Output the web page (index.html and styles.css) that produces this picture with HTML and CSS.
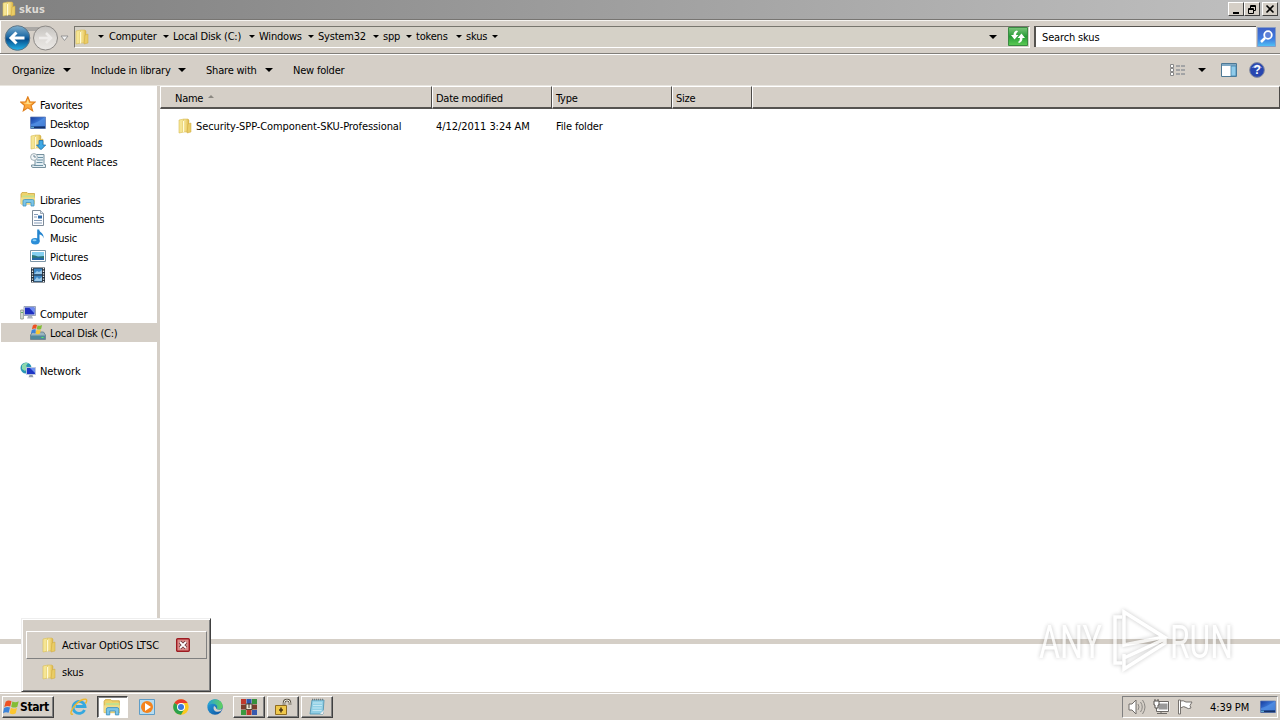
FILE: index.html
```html
<!DOCTYPE html>
<html lang="en">
<head>
    <meta charset="UTF-8">
    <meta name="viewport" content="width=device-width, initial-scale=1.0">
    <title>skus</title>
    <link rel="stylesheet" href="styles.css">
</head>
<body>
    <!-- Shared icons -->
    <svg class="defs" width="0" height="0">
        <defs>
            <linearGradient id="gold"><stop offset="0" stop-color="#f9edaa"/><stop offset=".6" stop-color="#edd272"/><stop offset="1" stop-color="#d9b245"/></linearGradient>
            <linearGradient id="blue" x2="1" y2="1"><stop offset="0" stop-color="#163a9c"/><stop offset=".5" stop-color="#3b78d8"/><stop offset="1" stop-color="#1c4fae"/></linearGradient>
            <linearGradient id="back" x2="0" y2="1"><stop offset="0" stop-color="#7fb0cf"/><stop offset=".45" stop-color="#1f6aa5"/><stop offset=".55" stop-color="#064d8c"/><stop offset="1" stop-color="#26b4ea"/></linearGradient>
            <linearGradient id="fwd" x2="0" y2="1"><stop offset="0" stop-color="#c4c2bf"/><stop offset=".5" stop-color="#dddad6"/><stop offset="1" stop-color="#ebe9e6"/></linearGradient>
            <linearGradient id="find" x2="0" y2="1"><stop offset="0" stop-color="#3e5fc4"/><stop offset=".6" stop-color="#3e7be0"/><stop offset="1" stop-color="#52c3f5"/></linearGradient>
            <linearGradient id="go" x2="0" y2="1"><stop offset="0" stop-color="#7dc57c"/><stop offset=".5" stop-color="#259c36"/><stop offset="1" stop-color="#5dcc55"/></linearGradient>
            <linearGradient id="edge" x2="1" y2="1"><stop offset="0" stop-color="#2ba7e0"/><stop offset="1" stop-color="#0c4f9e"/></linearGradient>
            <linearGradient id="edgeTop"><stop offset="0" stop-color="#249fdc"/><stop offset="1" stop-color="#62d35a"/></linearGradient>
        </defs>
        <symbol id="folder" viewBox="0 0 16 16">
            <path d="M2 2l5-1v13l-5 1z" fill="#f5e594" stroke="#d8bd55" stroke-width=".6"/>
            <path d="M7 1h4l1 1v12H6V3z" fill="url(#gold)" stroke="#d3b34c" stroke-width=".5"/>
            <path d="M11 6l3-1v9l-4 1z" fill="#e9cc66" stroke="#cfa83e" stroke-width=".5"/>
            <path d="M6.500 3v11.500" stroke="#fffbd8"/>
        </symbol>
        <symbol id="star" viewBox="0 0 16 16"><path d="M7.800.8l2.100 5 5.300.2-4.100 3.500 1.500 5.300-4.800-3-4.500 3 1.300-5.300L.6 6l5.100-.2z" fill="#fda83c" stroke="#e0801e" stroke-width="1.100"/><path d="M7.800 3l1.200 4 3.500.2-3.300 1-5.700-1 3-.4z" fill="#ffe08a"/></symbol>
        <symbol id="desktop" viewBox="0 0 16 16"><path d="M.5 2h15v11.500H.5z" fill="url(#blue)" stroke="#5b76b0" stroke-width=".7"/><path d="M1 9q6-1 14-7v9H1z" fill="#5b97e8" opacity=".6"/><path d="M1 11.500h14v1.800H1z" fill="#173266"/><path d="M1 11.800h3v1H1z" fill="#73c5e8"/></symbol>
        <symbol id="down" viewBox="0 0 16 16"><use href="#folder" x="-1"/><path d="M9 6.500h4V11h2.700L11 15.700 6.500 11H9z" fill="#3ea8e5" stroke="#1c6fae" stroke-width=".8"/></symbol>
        <symbol id="recent" viewBox="0 0 16 16"><path d="M5 1.500h9v10h1.500v3H3q-2 0-1.500-2.500H5z" fill="#e3eef3" stroke="#76909d"/><path d="M8 4.500h5M7 7h6M6.500 9.500h6M4 12.500h9" stroke="#6f93a6"/><circle cx="4" cy="4" r="3.400" fill="#f4f7f8" stroke="#8b9da6" stroke-width=".8"/><path d="M4 2v2h2" fill="none" stroke="#506f80" stroke-width=".8"/></symbol>
        <symbol id="library" viewBox="0 0 16 16"><path d="M1 3l1-1.500h5l1 1h6.500V13H1z" fill="#efd36c" stroke="#cba740" stroke-width=".8"/><path d="M2.500 4.500h12v2h-12z" fill="#c3e08e"/><path d="M1 6.500h14V13H1z" fill="#f2dd89"/><path d="M3 15V10q0-1.500 1.500-1.500h8Q14 8.500 14 10v5h-3v-3.500H6V15z" fill="#7cc5e8" stroke="#4294c2" stroke-width=".8"/></symbol>
        <symbol id="document" viewBox="0 0 16 16"><path d="M2.500.5h8l3 3v12h-11z" fill="#fcfdff" stroke="#7e8b99"/><path d="M10.500.5v3h3" fill="#dbe4ed" stroke="#7e8b99" stroke-width=".7"/><path d="M4 4.500h4M4 7h3M4 10.500h8M4 13h8" stroke="#7890ae" stroke-width=".9"/><path d="M8 5.500h4v3H8z" fill="#2f6cab"/></symbol>
        <symbol id="music" viewBox="0 0 16 16"><ellipse cx="5.300" cy="12.200" rx="4.300" ry="3.200" fill="#2b8ed8"/><path d="M7.200 12V.5h2c0 3 5.300 3.500 4.300 9-.5-3-2.500-4-4-4v7z" fill="#2585cf"/><ellipse cx="4.500" cy="11.200" rx="2" ry="1" fill="#8bd0f6"/></symbol>
        <symbol id="picture" viewBox="0 0 16 16"><path d="M.5 2.500h15v11H.5z" fill="#fff" stroke="#7d96a7"/><path d="M2 4h12v8H2z" fill="#84cff0"/><path d="M2 7q3 0 6 1.500l6-.5v4H2z" fill="#2c7776"/><path d="M2 10.500q6-2 12 0V12H2z" fill="#2467a8"/></symbol>
        <symbol id="video" viewBox="0 0 16 16"><path d="M1 .5h14v15H1z" fill="#26303b"/><path d="M4 1.500h8v6H4zM4 8.500h8v6H4z" fill="#3e87c5"/><path d="M4 7l3-3 2 1 3-2v4zM4 14l3-4 2 2 3-2v4z" fill="#9ac8e8"/><path d="M2.500 1v14M13.500 1v14" stroke="#e8edf0" stroke-width="1.300" stroke-dasharray="1.300 1.300"/></symbol>
        <symbol id="computer" viewBox="0 0 16 16"><path d="M.7 5h2.600v9H.7z" fill="#dde5dc" stroke="#7e8b7d" stroke-width=".8"/><path d="M1.300 7h1.500v1H1.300z" fill="#3b9f43"/><path d="M4 1.500h11.500v9H4z" fill="#e1e6ef" stroke="#8490a9" stroke-width=".8"/><path d="M5 2.500h9.500v7H5z" fill="#1c2ec0"/><path d="M9 2.500h5.500v6z" fill="#6d8bf0"/><path d="M8 11h4l1 2.500H7z" fill="#a9b1bd"/></symbol>
        <symbol id="winflag" viewBox="0 0 16 16"><path d="M2.500 2.500Q5 .5 8 2L6.800 7Q4 6 1.200 7.500z" fill="#ee5122"/><path d="M8.800 2.300q3 1.500 6-.3l-1.300 5.200q-3 1.800-5.800 0z" fill="#83bd36"/><path d="M1 8.500q3-1.700 5.600-.4L5.300 13q-2.700-1.200-5.300.4z" fill="#3b83d9"/><path d="M7.500 8.300q3 1.600 5.700 0L12 13.400q-3 1.800-5.800-.1z" fill="#fcc630"/></symbol>
        <symbol id="disk" viewBox="0 0 16 16"><path d="M2.500 8h11l2 3v4.500H.5V11z" fill="#9ab4bf" stroke="#607a86" stroke-width=".8"/><path d="M1 11.500h14V15H1z" fill="#51899b"/><path d="M11.500 13h2v1h-2z" fill="#5aef65"/><use href="#winflag" x="1" y="-.5" width="12" height="12"/></symbol>
        <symbol id="network" viewBox="0 0 16 16"><circle cx="6" cy="6" r="5.500" fill="#2995b4"/><path d="M2 3q3-3 6-2L6 4l2 2-3 3-3-2z" fill="#8ed9ad"/><path d="M6.500 5.500h9v7h-9z" fill="#1e36c5" stroke="#c3ccdf" stroke-width=".9"/><path d="M10 6h5v5z" fill="#6c90ee"/><path d="M9.500 13h3l1 2.300H8.500z" fill="#929dad"/></symbol>
    </svg>

    <div class="screen">
        <!-- Title bar -->
        <div class="titlebar">
            <svg class="icon"><use href="#folder"/></svg>
            <span class="title">skus</span>
            <div class="controls">
                <div class="control"><svg width="13" height="11"><path d="M3 8h6v2H3z"/></svg></div>
                <div class="control"><svg width="13" height="11"><path d="M4.500 4V1.500h5v5H8M4.500 2.500h5M2.500 4.500h5v5h-5zM2.500 5.500h5" fill="none" stroke="#000"/></svg></div>
                <div class="control close"><svg width="13" height="11"><path d="M2.500 1.500l7 7M9.500 1.500l-7 7" stroke="#000" stroke-width="1.600"/></svg></div>
            </div>
        </div>

        <!-- Address bar -->
        <div class="navbar">
            <svg class="history" width="70" height="28" viewBox="0 0 70 28">
                <path d="M17 3h29v4H17z" fill="#aaa8a5"/>
                <circle cx="17.500" cy="14" r="12.300" fill="url(#back)" stroke="#5d7485"/>
                <path d="M10.500 14h14M16.500 8.500L11 14l5.500 5.500" fill="none" stroke="#fff" stroke-width="3"/>
                <circle cx="45.500" cy="14" r="12" fill="url(#fwd)" stroke="#8c8986"/>
                <path d="M39 14h12M46 9l5 5-5 5" fill="none" stroke="#eeecea" stroke-width="2.500"/>
                <path d="M61 12h7l-3.500 4.500z" fill="#f2f2f2" stroke="#8d8d8d" stroke-width=".9"/>
            </svg>
            <div class="address">
                <svg class="icon"><use href="#folder"/></svg>
                <i class="arrow"></i>
                <div class="crumbs">
                    <span>Computer<i class="arrow"></i></span>
                    <span>Local Disk (C:)<i class="arrow"></i></span>
                    <span>Windows<i class="arrow"></i></span>
                    <span>System32<i class="arrow"></i></span>
                    <span>spp<i class="arrow"></i></span>
                    <span>tokens<i class="arrow"></i></span>
                    <span>skus<i class="arrow"></i></span>
                </div>
                <i class="arrow big"></i>
                <svg class="refresh" width="20" height="19" viewBox="0 0 20 19"><path d="M.5.5h19v18H.5z" fill="url(#go)" stroke="#3a8a42"/><path d="M9 3.500Q5.500 4 5.500 8H3l3.500 4.500L10.500 8H8q0-2.500 2-3.500zM11 16q3.500-1 3.500-5H17l-3.500-4.500L9.500 11H12q0 3-2 4z" fill="#fff"/></svg>
            </div>
            <div class="search">Search skus</div>
            <svg class="find" width="19" height="20" viewBox="0 0 19 20"><path d="M.5.5h18v19H.5z" fill="url(#find)" stroke="#879cc5"/><circle cx="11" cy="8" r="3.800" fill="#5d80d8" stroke="#fff" stroke-width="1.800"/><path d="M8 11l-4 4" stroke="#fff" stroke-width="2.500"/></svg>
        </div>

        <!-- Toolbar -->
        <div class="toolbar">
            <span class="organize">Organize<i class="arrow big"></i></span>
            <span class="include">Include in library<i class="arrow big"></i></span>
            <span class="share">Share with<i class="arrow big"></i></span>
            <span>New folder</span>
            <div class="tools">
                <svg width="16" height="14" viewBox="0 0 16 14"><path d="M.5 1.500h3v3h-3zM.5 5.500h3v3h-3zM.5 9.500h3v3h-3z" fill="#fff" stroke="#888"/><path d="M6 3h9M6 7h9M6 11h9" stroke="#707983" stroke-dasharray="4 1"/></svg>
                <i class="arrow big"></i>
                <svg class="preview" width="16" height="14" viewBox="0 0 16 14"><path d="M.5.5h15v13H.5z" fill="#fff" stroke="#4d7894"/><path d="M1 1h14v2H1z" fill="#7fa9c5"/><path d="M10 3h5v10h-5z" fill="#8fcbea" stroke="#4282a8" stroke-width=".8"/></svg>
                <svg class="help" width="16" height="16" viewBox="0 0 16 16"><circle cx="8" cy="8" r="7.400" fill="#2746b0" stroke="#868da1"/><path d="M2.500 6Q8-1 13.500 6 8 5 2.500 6z" fill="#7c94dc"/><text x="8" y="12.300" text-anchor="middle" class="question">?</text></svg>
            </div>
        </div>

        <div class="main">
            <!-- Navigation pane -->
            <div class="sidebar">
                <div class="group">
                    <div class="item head"><svg class="icon"><use href="#star"/></svg>Favorites</div>
                    <div class="item"><svg class="icon"><use href="#desktop"/></svg>Desktop</div>
                    <div class="item"><svg class="icon"><use href="#down"/></svg>Downloads</div>
                    <div class="item wide"><svg class="icon"><use href="#recent"/></svg>Recent Places</div>
                </div>
                <div class="group">
                    <div class="item head"><svg class="icon"><use href="#library"/></svg>Libraries</div>
                    <div class="item"><svg class="icon"><use href="#document"/></svg>Documents</div>
                    <div class="item"><svg class="icon"><use href="#music"/></svg>Music</div>
                    <div class="item wide"><svg class="icon"><use href="#picture"/></svg>Pictures</div>
                    <div class="item"><svg class="icon"><use href="#video"/></svg>Videos</div>
                </div>
                <div class="group">
                    <div class="item head"><svg class="icon"><use href="#computer"/></svg>Computer</div>
                    <div class="item selected"><svg class="icon"><use href="#disk"/></svg>Local Disk (C:)</div>
                </div>
                <div class="group">
                    <div class="item head wide"><svg class="icon"><use href="#network"/></svg>Network</div>
                </div>
            </div>

            <!-- File list -->
            <div class="files">
                <div class="columns">
                    <div class="col name">Name<i class="sort"></i></div>
                    <div class="col">Date modified</div>
                    <div class="col">Type</div>
                    <div class="col">Size</div>
                    <div class="col"></div>
                </div>
                <div class="row">
                    <div class="file"><svg class="icon"><use href="#folder"/></svg><span>Security-SPP-Component-SKU-Professional</span></div>
                    <div class="date">4/12/2011 3:24 AM</div>
                    <div class="type">File folder</div>
                </div>
            </div>
        </div>
        <div class="details"></div>

        <!-- Taskbar -->
        <div class="taskbar">
            <div class="start"><svg width="17" height="17"><use href="#winflag"/></svg>Start</div>
            <div class="task"><svg width="18" height="18" viewBox="0 0 18 18"><path d="M14.500 12A6 6 0 1 1 15 8.500H5.500" fill="none" stroke="#35a8df" stroke-width="2.800"/><path d="M3 16C-3 18 5 4 13 1.500c5-1.500 4 2 2.500 4" fill="none" stroke="#edb82e" stroke-width="1.400"/></svg></div>
            <div class="task pressed"><svg width="18" height="18"><use href="#library"/></svg></div>
            <div class="task"><svg width="16" height="16" viewBox="0 0 16 16"><path d="M.5.5h15v15H.5z" fill="#b7dcf0" stroke="#5e9dc7"/><circle cx="8" cy="8" r="6" fill="#f4831c"/><path d="M6 4l6 4-6 4z" fill="#fff"/></svg></div>
            <div class="task"><svg width="16" height="16" viewBox="0 0 16 16"><circle cx="8" cy="8" r="7.700" fill="#fbc91e"/><path d="M8 8L1.300 4.100A7.700 7.700 0 0 1 14.700 4.100H8z" fill="#e83b2e"/><path d="M8 8L1.300 4.100A7.700 7.700 0 0 0 8 15.700L11.400 10z" fill="#2ca24c"/><circle cx="8" cy="8" r="4" fill="#fff"/><circle cx="8" cy="8" r="3" fill="#3978de"/></svg></div>
            <div class="task"><svg width="16" height="16" viewBox="0 0 16 16"><circle cx="8" cy="8" r="7.700" fill="url(#edge)"/><path d="M.5 7C2-2 15-1 15.700 7c.3 4-5 4.500-6 2.500C12 6 6 2 .5 7z" fill="url(#edgeTop)"/><path d="M7 7c-2 5 3 7 7 5l1-2q-3 1.500-5.500 0C9 9 9 8 7 7z" fill="#d6d0c9"/></svg></div>
            <div class="task raised"><svg width="18" height="18" viewBox="0 0 18 18"><path d="M1 1h5v5H1zM1 12h5v5H1z" fill="#c0392c"/><path d="M6.500 1h5v5h-5z" fill="#3156ad"/><path d="M12 1h5v5h-5z" fill="#35913c"/><path d="M1 6.500h16v5H1z" fill="#7c3d2c"/><path d="M1 12h5v5H1z" fill="#3a9a40"/><path d="M6.500 12h5v5h-5z" fill="#b8392c"/><path d="M12 12h5v5h-5z" fill="#3659ae"/><path d="M6 6h6v5.500H6z" fill="#ece5d4" stroke="#554a3a"/><path d="M9 5v5" stroke="#3b332a"/></svg></div>
            <div class="task raised"><svg width="18" height="18" viewBox="0 0 18 18"><path d="M10 8V5q0-3 3-3t3 3v2" fill="none" stroke="#554f43" stroke-width="2.500"/><path d="M10 8V5q0-3 3-3t3 3v2" fill="none" stroke="#efebdf"/><path d="M1.500 7.500h11v9h-11z" fill="#efc84b" stroke="#8f6b20"/><path d="M7 9.500v5M5 12h4" stroke="#473314" stroke-width="1.500"/></svg></div>
            <div class="task raised"><svg width="18" height="18" viewBox="0 0 18 18"><path d="M4 2h12l-1 14H2z" fill="#91cfe5" stroke="#4a91ad" stroke-width=".8"/><path d="M5 5h9M5 7.500h9M4.500 10h9M4.500 12.500h9" stroke="#c4e8f3"/><path d="M4 1.500h12" stroke="#777" stroke-width="1.500" stroke-dasharray="1 1"/><path d="M12 16l4-4-1 4z" fill="#eee"/></svg></div>
            <div class="tray">
                <svg width="18" height="16" viewBox="0 0 18 16"><path d="M1 5h3l4-4v14l-4-4H1z" fill="#fff" stroke="#706d69"/><path d="M10 5q2 3 0 6M12.500 3q3.500 5 0 10M14.500 1q5 7 0 14" fill="none" stroke="#8a8783"/></svg>
                <svg class="lan" width="17" height="16" viewBox="0 0 17 16"><path d="M4.500 3.500h11v8h-11z" fill="#999" stroke="#fff" stroke-width="2"/><path d="M3.500 2.500h12v10h-12zM8 12v2.500M4 14.500h10" fill="none" stroke="#6b6864"/><path d="M1 2h5v4H5v3H2V6H1z" fill="#fff" stroke="#56534f"/><path d="M2 0v2M5 0v2" stroke="#56534f"/></svg>
                <svg class="flag" width="17" height="16" viewBox="0 0 17 16"><path d="M1.500 1h2v14h-2z" fill="#fff" stroke="#77736f"/><path d="M3.500 2Q6 1 9 3h6l-2 3.500 1 2.500q-3 1.500-5-.5T3.500 9z" fill="#fff" stroke="#77736f"/></svg>
                <span class="clock">4:39 PM</span>
                <svg class="icon"><use href="#desktop"/></svg>
            </div>
        </div>

        <!-- Window picker above the taskbar -->
        <div class="popup">
            <div class="window active"><svg class="icon"><use href="#folder"/></svg><span>Activar OptiOS LTSC</span><svg class="x" width="14" height="14" viewBox="0 0 14 14"><rect x=".7" y=".7" width="12.600" height="12.600" rx="1" fill="#dc8b88" stroke="#9c1b21" stroke-width="1.400"/><path d="M4 4l6 6M10 4l-6 6" stroke="#67363a" stroke-width="3.500"/><path d="M4 4l6 6M10 4l-6 6" stroke="#fff" stroke-width="1.800"/></svg></div>
            <div class="window"><svg class="icon"><use href="#folder"/></svg><span>skus</span></div>
        </div>

        <!-- Watermark -->
        <svg class="watermark" width="250" height="76" viewBox="0 0 250 76">
            <text x="9" y="56" textLength="63" lengthAdjust="spacingAndGlyphs">ANY</text>
            <path d="M92 15h-7v46h7M94 10v33L134 35zM94 10l38 24M94 52v15l41-26v-4L94 56" fill="none"/>
            <text x="140" y="56" textLength="63" lengthAdjust="spacingAndGlyphs">RUN</text>
        </svg>
    </div>
</body>
</html>
```

FILE: styles.css
```css
* {
    box-sizing: border-box;
}
body {
    margin: 0;
    font-family: "DejaVu Sans Condensed", "DejaVu Sans", sans-serif;
    font-stretch: condensed;
    font-size: 11px;
    letter-spacing: -0.25px;
    color: #000;
    white-space: nowrap;
}
svg {
    display: block;
    flex: none;
}
.defs {
    position: absolute;
}
.screen {
    position: relative;
    display: flex;
    flex-direction: column;
    width: 1280px;
    height: 720px;
    overflow: hidden;
    background: #d5cfc7;
}
.icon {
    width: 16px;
    height: 16px;
}
.arrow {
    flex: none;
    border: 3px solid transparent;
    border-top-color: #000;
    border-bottom: 0;
}
.arrow.big {
    border-width: 4px 4px 0;
}

/* Title bar */
.titlebar {
    display: flex;
    align-items: center;
    height: 19px;
    padding: 0 2px 1px 1px;
    background: linear-gradient(to right, #808080, #c0c0c0);
}
.title {
    margin-left: 2px;
    color: #dedbd5;
    font-weight: bold;
    letter-spacing: 0.2px;
}
.controls {
    display: flex;
    margin-left: auto;
}
.control {
    width: 16px;
    height: 14px;
    padding: 1px;
    background: #d5cfc7;
    border: 1px solid;
    border-color: #fff #404040 #404040 #fff;
}
.close {
    margin-left: 2px;
}

/* Address bar */
.navbar {
    display: flex;
    align-items: center;
    height: 35px;
    padding: 0 3px 0 0;
    border-top: 1px solid #777572;
    border-bottom: 1px solid #817e79;
    box-shadow: inset 0 1px #f5f3ef, inset 1px 0 #fff, 0 1px #fff;
}
.history {
    margin-top: 2px;
}
.address {
    display: flex;
    align-items: center;
    width: 956px;
    height: 22px;
    margin-left: 4px;
    padding-right: 1px;
    border: 1px solid;
    border-color: #77756d #fff #fff #77756d;
    background: #d5d1c7;
}
.address .icon {
    margin-left: -1px;
}
.address > .arrow {
    margin-left: 8px;
}
.crumbs {
    display: grid;
    grid-template-columns: 60px 82px 55px 61px 29px 46px 32px;
    column-gap: 4px;
    margin-left: 5px;
}
.crumbs span {
    display: flex;
    align-items: center;
    justify-content: space-between;
    letter-spacing: -0.2px;
}
.address > .arrow.big {
    margin-left: auto;
}
.refresh {
    margin-left: 11px;
}
.search {
    width: 222px;
    height: 21px;
    margin-left: 4px;
    padding: 3px 6px;
    line-height: 15px;
    background: #fff;
    border: solid #55534f;
    border-width: 1px 0 0 2px;
    letter-spacing: -0.15px;
}
.find {
    margin-left: 1px;
}

/* Toolbar */
.toolbar {
    display: flex;
    align-items: center;
    height: 31px;
    padding: 1px 15px 0 12px;
}
.toolbar > span {
    display: flex;
    align-items: center;
    justify-content: space-between;
    letter-spacing: -0.2px;
}
.organize {
    width: 59px;
    margin-right: 20px;
}
.include {
    width: 95px;
    margin-right: 20px;
}
.share {
    width: 67px;
    margin-right: 20px;
}
.tools {
    display: flex;
    align-items: center;
    margin-left: auto;
}
.tools .arrow {
    margin-left: 12px;
}
.preview {
    margin-left: 15px;
}
.help {
    margin-left: 12px;
}
.question {
    font: bold 12px "Liberation Sans", sans-serif;
    fill: #fff;
}

/* Explorer panes */
.main {
    display: flex;
    height: 554px;
    border-top: 1px solid #e9e6e0;
}
.sidebar {
    width: 160px;
    padding: 9px 0 0 1px;
    background: #fff;
    border-right: 3px solid #d5cfc7;
}
.group {
    margin-bottom: 19px;
}
.item {
    display: flex;
    align-items: center;
    gap: 4px;
    height: 19px;
    padding: 2px 0 0 29px;
}
.item .icon {
    margin-top: -3px;
}
.item.head {
    padding-left: 19px;
}
.item.wide {
    letter-spacing: -0.1px;
}
.selected {
    background: #d5cfc7;
}
.files {
    flex: 1;
    background: #fff;
}
.columns {
    display: grid;
    grid-template-columns: 272px 120px 120px 80px 1fr;
    height: 23px;
    margin-right: 0;
}
.col {
    display: flex;
    align-items: center;
    padding: 2px 0 0 3px;
    background: #d5cfc7;
    border: solid;
    border-width: 1px 1px 2px;
    border-color: #fff #4c4a47 #555350 #fff;
}
.col.name {
    padding-left: 14px;
}
.sort {
    margin: -3px 0 0 5px;
    border: 3px solid transparent;
    border-top: 0;
    border-bottom-color: #8b8881;
}
.row {
    display: grid;
    grid-template-columns: 276px 120px 120px;
    align-items: center;
    height: 20px;
    margin-top: 7px;
}
.file {
    display: flex;
    align-items: center;
    gap: 3px;
    padding-left: 17px;
    letter-spacing: -0.1px;
}
.date {
    letter-spacing: -0.05px;
}
.type {
    letter-spacing: -0.15px;
}
.details {
    height: 53px;
    background: #fff;
    border-top: 5px solid #d5cfc7;
}

/* Taskbar */
.taskbar {
    display: flex;
    align-items: center;
    height: 28px;
    padding: 1px 2px 0;
    border-top: 1px solid #d5cfc7;
    box-shadow: inset 0 1px #fff;
}
.start {
    display: flex;
    align-items: center;
    width: 52px;
    height: 22px;
    margin-right: 9px;
    font-size: 12px;
    font-weight: bold;
    letter-spacing: -0.4px;
    border: 1px solid;
    border-color: #fff #404040 #404040 #fff;
    box-shadow: inset -1px -1px #808080;
}
.task {
    display: flex;
    align-items: center;
    justify-content: center;
    width: 32px;
    height: 22px;
    margin-right: 2px;
}
.pressed {
    width: 31px;
    margin-right: 3px;
    padding-right: 2px;
    background: #fff;
    border: 1px solid;
    border-color: #404040 #fff #fff #404040;
    box-shadow: inset 1px 1px #808080;
}
.raised {
    border: 1px solid;
    border-color: #fff #404040 #404040 #fff;
    box-shadow: inset -1px -1px #808080;
}
.tray {
    display: flex;
    align-items: center;
    width: 156px;
    height: 22px;
    margin-left: auto;
    padding-left: 5px;
    border: 1px solid;
    border-color: #808080 #fff #fff #808080;
}
.lan {
    margin-left: 7px;
}
.flag {
    margin-left: 7px;
}
.clock {
    width: 41px;
    margin: 0 9px 0 16px;
    letter-spacing: -0.1px;
}

/* Window picker */
.popup {
    position: absolute;
    left: 21px;
    top: 618px;
    width: 190px;
    height: 74px;
    padding: 12px 3px 0 4px;
    background: #d5cfc7;
    border: 1px solid;
    border-color: #eee #404040 #404040 #eee;
    box-shadow: inset 1px 1px #fff, inset -1px -1px #808080;
}
.window {
    display: flex;
    align-items: center;
    height: 26px;
    padding-left: 14px;
    border: 1px solid transparent;
    letter-spacing: -0.1px;
}
.window span {
    margin-left: 5px;
}
.window .x {
    margin: 0 16px 0 auto;
}
.active {
    height: 28px;
    border-color: #fff #808080 #808080 #fff;
}

/* Watermark */
.watermark {
    position: absolute;
    left: 1030px;
    top: 602px;
    filter: drop-shadow(0 0 2px rgba(0, 0, 0, 0.3));
    opacity: 0.75;
}
.watermark text {
    font: 46px Roboto, "Liberation Sans", sans-serif;
    letter-spacing: 0;
    fill: #fff;
}
.watermark path {
    stroke: #fff;
    stroke-width: 3.5;
}
```
